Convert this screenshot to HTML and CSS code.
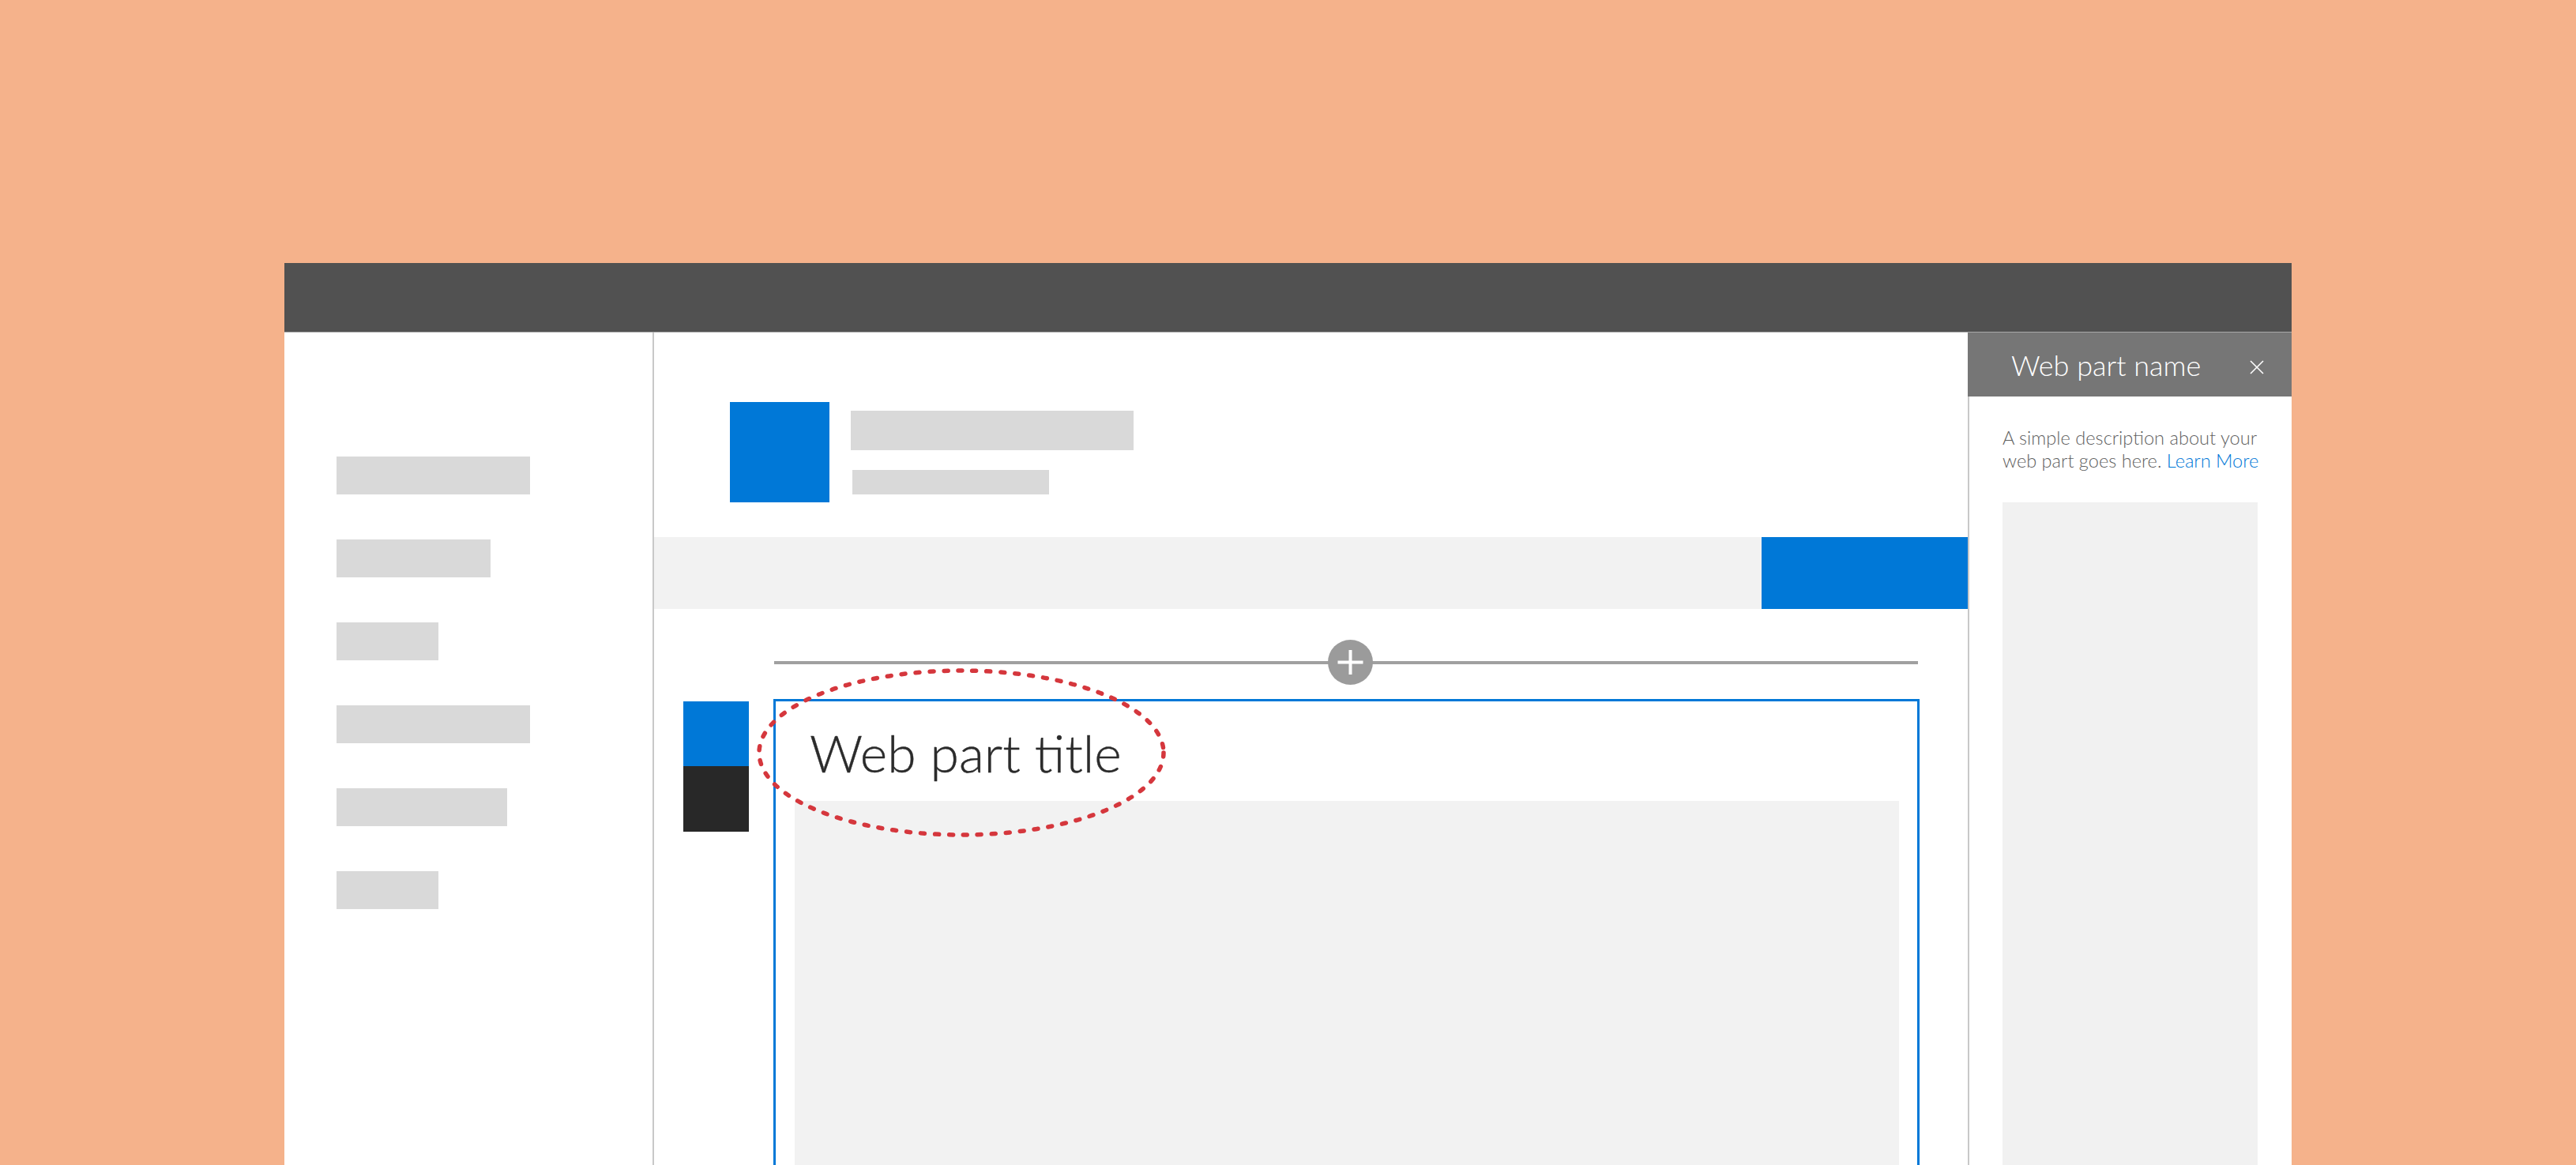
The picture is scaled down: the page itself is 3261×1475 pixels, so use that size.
FILE: index.html
```html
<!DOCTYPE html>
<html lang="en">
<head>
<meta charset="utf-8">
<title>Web part title</title>
<link rel="stylesheet" href="styles.css">
</head>
<body>
<div class="stage">
  <div class="window">
    <div class="topbar"></div>
    <div class="frame">
      <nav class="nav">
        <div class="nav-item w245"></div>
        <div class="nav-item w195"></div>
        <div class="nav-item w129"></div>
        <div class="nav-item w245"></div>
        <div class="nav-item w216"></div>
        <div class="nav-item w129"></div>
      </nav>
      <main class="main">
        <header class="site-header">
          <div class="logo"></div>
          <div class="site-titles">
            <div class="bar-title"></div>
            <div class="bar-sub"></div>
          </div>
        </header>
        <div class="commandbar">
          <div class="cmd-fill"></div>
          <div class="cmd-btn"></div>
        </div>
        <div class="canvas">
          <div class="divider-row">
            <div class="divider-line"></div>
            <div class="add-btn">
              <svg width="57" height="57" viewBox="0 0 57 57">
                <circle cx="28.5" cy="28.5" r="28.5" fill="#9b9b9b"/>
                <line x1="12.5" y1="28.5" x2="44.5" y2="28.5" stroke="#fff" stroke-width="4"/>
                <line x1="28.5" y1="13" x2="28.5" y2="44" stroke="#fff" stroke-width="4"/>
              </svg>
            </div>
          </div>
          <div class="section">
            <div class="toolbar">
              <div class="tb-blue"></div>
              <div class="tb-dark"></div>
            </div>
            <div class="webpart">
              <svg class="highlight" width="530" height="226" viewBox="0 0 530 226">
                <ellipse cx="265" cy="113" rx="256" ry="104" fill="none" stroke="#d5373d" stroke-width="5.5" stroke-dasharray="5 13" stroke-linecap="round"/>
              </svg>
              <h2 class="wp-title">Web part title</h2>
              <div class="wp-content"></div>
            </div>
          </div>
        </div>
      </main>
      <aside class="panel">
        <div class="panel-head">
          <span class="panel-title">Web part name</span>
          <svg class="panel-close" width="18" height="18" viewBox="0 0 18 18">
            <line x1="1" y1="1" x2="17" y2="17" stroke="#fff" stroke-width="1.6"/>
            <line x1="17" y1="1" x2="1" y2="17" stroke="#fff" stroke-width="1.6"/>
          </svg>
        </div>
        <div class="panel-body">
          <p class="panel-desc">A simple description about your web part goes here. <a class="panel-link" href="#">Learn More</a></p>
          <div class="panel-box"></div>
        </div>
      </aside>
    </div>
  </div>
</div>
</body>
</html>
```

FILE: styles.css
```css
* { box-sizing: border-box; }

html, body {
  margin: 0;
  padding: 0;
}

body {
  width: 3261px;
  height: 1475px;
  overflow: hidden;
  background: #f5b28b;
  font-family: Lato, "Open Sans", "Liberation Sans", sans-serif;
}

.stage {
  padding: 333px 0 0 360px;
  height: 1475px;
}

.window {
  width: 2541px;
  height: 1142px;
  display: flex;
  flex-direction: column;
  background: #fff;
}

.topbar {
  height: 88px;
  flex: none;
  background: #515151;
  border-bottom: 1px solid #a8a8a8;
}

.frame {
  flex: 1;
  display: flex;
  min-height: 0;
}

/* left navigation */
.nav {
  width: 468px;
  flex: none;
  border-right: 2px solid #c8c8c8;
  padding: 157px 0 0 66px;
  display: flex;
  flex-direction: column;
  gap: 57px;
}

.nav-item {
  height: 48px;
  background: #d9d9d9;
}
.w245 { width: 245px; }
.w195 { width: 195px; }
.w129 { width: 129px; }
.w216 { width: 216px; }

/* main area */
.main {
  flex: 1;
  display: flex;
  flex-direction: column;
  min-width: 0;
}

.site-header {
  height: 259px;
  flex: none;
  display: flex;
  align-items: flex-start;
  padding: 88px 0 0 96px;
  gap: 27px;
}

.logo {
  width: 126px;
  height: 127px;
  background: #0078d7;
}

.site-titles {
  display: flex;
  flex-direction: column;
  padding-top: 11px;
  gap: 25px;
}

.bar-title {
  width: 358px;
  height: 50px;
  background: #d9d9d9;
}

.bar-sub {
  width: 249px;
  height: 31px;
  margin-left: 2px;
  background: #d9d9d9;
}

.commandbar {
  height: 91px;
  flex: none;
  display: flex;
}

.cmd-fill {
  flex: 1;
  background: #f2f2f2;
}

.cmd-btn {
  width: 261px;
  background: #0078d7;
}

.canvas {
  flex: 1;
  padding-left: 37px;
  display: flex;
  flex-direction: column;
  min-height: 0;
}

.divider-row {
  position: relative;
  margin: 66px 0 0 115px;
  width: 1448px;
  height: 4px;
  flex: none;
}

.divider-line {
  height: 4px;
  background: #a0a0a0;
}

.add-btn {
  position: absolute;
  left: 701px;
  top: -27px;
  width: 57px;
  height: 57px;
}

.add-btn svg { display: block; }

.section {
  flex: 1;
  display: flex;
  gap: 31px;
  margin-top: 44px;
  min-height: 0;
}

.toolbar {
  width: 83px;
  flex: none;
  margin-top: 3px;
  display: flex;
  flex-direction: column;
}

.tb-blue {
  height: 82px;
  background: #0078d7;
}

.tb-dark {
  height: 83px;
  background: #282828;
}

.webpart {
  position: relative;
  width: 1451px;
  flex: none;
  border: 3px solid #0078d7;
  border-bottom: none;
  padding: 24px 23px 0 24px;
  display: flex;
  flex-direction: column;
}

.highlight {
  position: absolute;
  left: -30px;
  top: -48px;
  pointer-events: none;
}

.wp-title {
  margin: 1px 0 22px 19px;
  font-size: 66px;
  font-weight: 300;
  line-height: 1.2;
  color: #2b2b2b;
  -webkit-text-stroke: 0.4px #2b2b2b;
}

.wp-content {
  flex: 1;
  background: #f2f2f2;
}

/* right property panel */
.panel {
  width: 410px;
  flex: none;
  display: flex;
  flex-direction: column;
}

.panel-head {
  height: 81px;
  flex: none;
  background: #767676;
  display: flex;
  align-items: flex-start;
  justify-content: space-between;
  padding: 20px 35px 0 55px;
}

.panel-title {
  font-size: 36px;
  font-weight: 300;
  color: #fff;
  line-height: 1.2;
}

.panel-close {
  margin-top: 15px;
}

.panel-body {
  flex: 1;
  border-left: 2px solid #c8c8c8;
  padding: 38px 0 0 42px;
}

.panel-desc {
  margin: 0;
  width: 340px;
  font-size: 23.6px;
  line-height: 29px;
  font-weight: 300;
  color: #5f5f5f;
}

.panel-link {
  color: #0078d7;
  text-decoration: none;
}

.panel-box {
  margin-top: 38px;
  width: 323px;
  height: 900px;
  background: #f1f1f1;
}
```
